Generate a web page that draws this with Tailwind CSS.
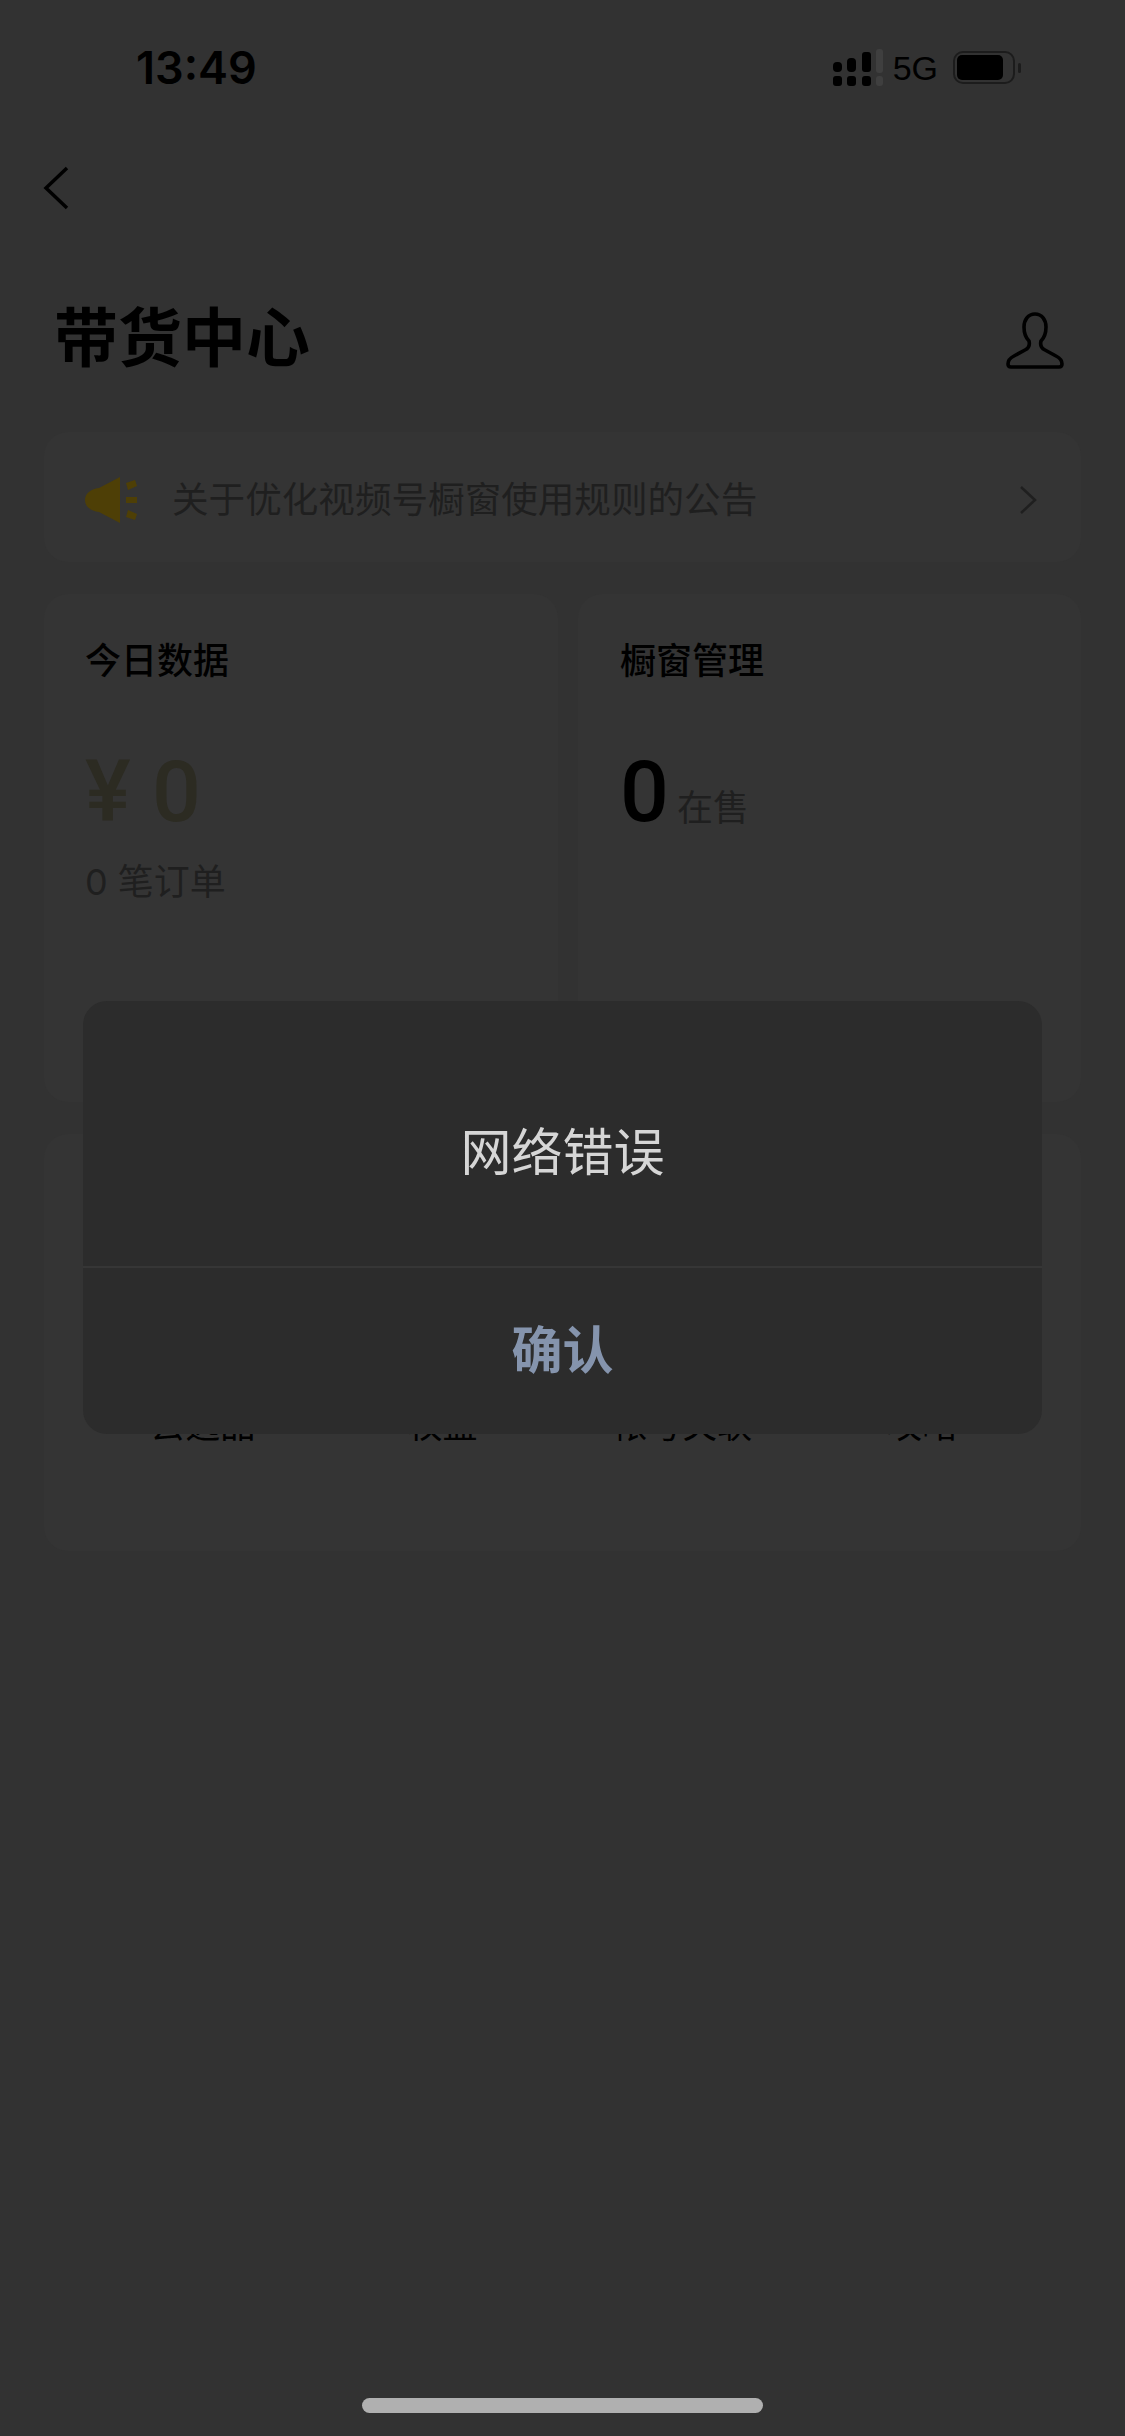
<!DOCTYPE html>
<html lang="zh-CN">
  <head>
    <meta charset="UTF-8" />
    <meta name="viewport" content="width=device-width, initial-scale=1.0" />
    <title>带货中心</title>
    <script src="https://cdn.jsdelivr.net/npm/@tailwindcss/browser@4"></script>
  </head>
  <body class="bg-[#323232] font-['Inter','Noto_Sans_CJK_SC',sans-serif]">
    <div class="relative w-[1125px] h-[2436px] overflow-hidden flex flex-col">
      <!-- Status bar -->
      <div class="h-[136px] pl-[136px] pr-[104px] flex items-center justify-between text-black">
        <span class="font-semibold text-[45px]">13:49</span>
        <div class="flex items-center gap-[10px]">
          <svg width="50" height="38" viewBox="0 0 50 38" fill="#000">
            <rect x="0" y="13" width="9" height="10" rx="4" />
            <rect x="14" y="9" width="9" height="14" rx="4" />
            <rect x="29" y="3" width="9" height="20" rx="3" />
            <rect x="43" y="0" width="7" height="24" rx="3" fill="#3f3f3f" />
            <rect x="0" y="27" width="9" height="10" rx="3" />
            <rect x="14" y="27" width="9" height="10" rx="3" />
            <rect x="29" y="27" width="9" height="10" rx="3" />
            <rect x="43" y="27" width="7" height="10" rx="3" fill="#3f3f3f" />
          </svg>
          <span class="font-['Liberation_Sans'] text-[34px] leading-none">5G</span>
          <svg width="68" height="34" viewBox="0 0 68 34" class="ml-[5px]">
            <rect x="1" y="1" width="60" height="31" rx="9" fill="none" stroke="#1c1c1c" stroke-width="2" />
            <rect x="4" y="4" width="46" height="25" rx="5" fill="#000" />
            <rect x="65" y="12" width="3" height="10" rx="1.5" fill="#1c1c1c" />
          </svg>
        </div>
      </div>

      <!-- Back -->
      <div class="h-[120px] pl-[43px] pt-[30px]">
        <svg width="26" height="44" viewBox="0 0 26 44" fill="none" stroke="#000" stroke-width="3.5">
          <path d="M24 2 L3 22 L24 42" />
        </svg>
      </div>

      <!-- Title row -->
      <div class="h-[176px] pl-[54px] pr-[60px] flex items-start justify-between">
        <h1 class="pt-[42px] text-[64px] leading-[80px] font-bold text-black">带货中心</h1>
        <svg class="mt-[56px]" width="60" height="58" viewBox="0 0 60 58" fill="none" stroke="#000" stroke-width="3.6">
          <path d="M30 2 C23 2 19 8 19 15 C19 22 21 26 24 29 C25 33 24 36 20 38 L9 44 C5 46 3 49 3 52 C3 54 4 55 6 55 L54 55 C56 55 57 54 57 52 C57 49 55 46 51 44 L40 38 C36 36 35 33 36 29 C39 26 41 22 41 15 C41 8 37 2 30 2 Z" />
        </svg>
      </div>

      <!-- Content -->
      <div class="px-[44px] flex flex-col gap-[32px]">
        <div class="h-[130px] rounded-[24px] bg-[#343434] pl-[41px] pr-[44px] pt-[6px] flex items-center">
          <svg width="52" height="46" viewBox="0 0 52 46" fill="#4e3f06">
            <path d="M35 0 L35 46 L14 35 C5 34 0 29 0 23 C0 17 5 12 14 11 Z" />
            <path d="M41 6 L50 3 L52 9 L43 13 Z" />
            <rect x="41" y="20" width="11" height="6" />
            <path d="M43 33 L52 37 L50 43 L41 40 Z" />
          </svg>
          <span class="ml-[35px] text-[36.6px] text-[#1f1f1f]">关于优化视频号橱窗使用规则的公告</span>
          <svg class="ml-auto" width="18" height="30" viewBox="0 0 18 30" fill="none" stroke="#1f1f1f" stroke-width="2.5">
            <path d="M2 2 L16 15 L2 28" />
          </svg>
        </div>

        <div class="flex gap-[20px]">
          <div class="w-[514px] h-[508px] rounded-[24px] bg-[#343434] pl-[41px] pt-[42px]">
            <p class="text-[36px] leading-[50px] font-medium text-black">今日数据</p>
            <p class="mt-[56px] font-['Roboto','Noto_Sans_CJK_SC',sans-serif] text-[86px] leading-[100px] font-medium text-[#2c2b22]">¥ 0</p>
            <p class="mt-[15px] text-[36px] leading-[50px] text-[#1f1f1f]">0 笔订单</p>
          </div>
          <div class="flex-1 h-[508px] rounded-[24px] bg-[#343434] pl-[42px] pt-[42px]">
            <p class="text-[36px] leading-[50px] font-medium text-black">橱窗管理</p>
            <p class="mt-[56px] flex items-baseline leading-[100px] font-['Roboto','Noto_Sans_CJK_SC',sans-serif]">
              <span class="text-[86px] font-medium text-black">0</span>
              <span class="ml-[8px] text-[36px] text-[#1f1f1f]">在售</span>
            </p>
          </div>
        </div>

        <div class="h-[417px] rounded-[24px] bg-[#343434] px-[39px] pt-[267px] grid grid-cols-4 content-start text-center text-[35px] leading-[48px] text-black">
          <span>去选品</span>
          <span>权益</span>
          <span>帐号关联</span>
          <span>攻略</span>
        </div>
      </div>

      <!-- Home indicator -->
      <div class="absolute bottom-[23px] left-[362px] w-[401px] h-[15px] rounded-full bg-[#b0b0b0]"></div>

      <!-- Dialog -->
      <div class="absolute left-[83px] top-[1001px] w-[959px] h-[433px] rounded-[24px] bg-[#2c2c2c] flex flex-col">
        <div class="h-[265px] pt-[40px] flex items-center justify-center text-[51px] text-[#d6d6d6]">网络错误</div>
        <div class="flex-1 border-t-2 border-[#363636] flex items-center justify-center text-[51px] font-semibold text-[#8594ad]">确认</div>
      </div>
    </div>
  </body>
</html>
